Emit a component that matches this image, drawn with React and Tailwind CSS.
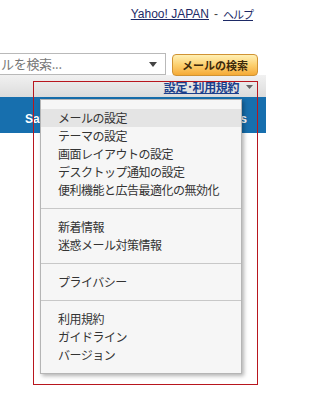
import React from "react";

const items1 = ["メールの設定", "テーマの設定", "画面レイアウトの設定", "デスクトップ通知の設定", "便利機能と広告最適化の無効化"];
const items2 = ["新着情報", "迷惑メール対策情報"];
const items3 = ["プライバシー"];
const items4 = ["利用規約", "ガイドライン", "バージョン"];

function Group({ items, highlightFirst }) {
  return (
    <div className="py-[9px]">
      {items.map((t, i) => (
        <div
          key={t}
          className={
            "h-[18px] leading-[18px] pl-[17px] whitespace-nowrap " +
            (highlightFirst && i === 0 ? "bg-[#e4e4e4]" : "")
          }
        >
          {t}
        </div>
      ))}
    </div>
  );
}

export default function App() {
  return (
    <div className="relative w-[266px] h-[393px] overflow-hidden bg-white font-['Liberation_Sans','Noto_Sans_CJK_JP',sans-serif]">
      {/* top links */}
      <div className="h-[53px] flex justify-end items-start pt-[6px] pr-[13px] text-[12px] leading-[16px] text-[#1d2a66]">
        <span className="underline">Yahoo! JAPAN</span>
        <span className="mx-[5px] text-[#444]">-</span>
        <span className="underline text-[11px] tracking-[-1px] font-['Noto_Sans_CJK_JP',sans-serif]">ヘルプ</span>
      </div>

      {/* search row */}
      <div className="h-[22px] flex items-start">
        <div className="relative z-10 ml-[-3px] w-[169px] h-[22px] border border-[#b9b9b9] bg-white flex items-center justify-between pl-[3px] pr-[8px]">
          <span className="text-[13px] leading-[16px] text-[#777] font-['Noto_Sans_CJK_JP',sans-serif] whitespace-nowrap tracking-[-0.3px]">
            ルを検索...
          </span>
          <svg width="8" height="5" viewBox="0 0 8 5">
            <path d="M0 0 L8 0 L4 5 Z" fill="#444" />
          </svg>
        </div>
        <div className="relative z-10 ml-[6px] mt-[1px] w-[86px] h-[22px] rounded-[4px] border border-[#d09334] bg-gradient-to-b from-[#fff0b4] via-[#fcd06e] to-[#f5aa35] flex items-center justify-center">
          <span className="text-[11px] leading-[14px] font-bold text-[#3d2a0c] font-['Noto_Sans_CJK_JP',sans-serif] whitespace-nowrap">
            メールの検索
          </span>
        </div>
      </div>

      {/* gray toolbar */}
      <div className="h-[22px] bg-gradient-to-b from-[#f1f1f1] to-[#dcdcdc] flex items-center justify-end pr-[13px]">
        <span className="text-[12px] leading-[15px] font-bold text-[#1b3f8c] underline font-['Noto_Sans_CJK_JP',sans-serif] whitespace-nowrap tracking-[-0.4px]">
          設定･利用規約
        </span>
        <svg className="ml-[7px] mt-[2px]" width="7" height="4" viewBox="0 0 7 4">
          <path d="M0 0 L7 0 L3.5 4 Z" fill="#666" />
        </svg>
      </div>

      {/* blue bar */}
      <div className="h-[36px] bg-[#176fae] flex justify-between items-start pt-[15px] pl-[25px] pr-[19px] text-[12px] leading-[14px] font-bold text-white">
        <span>Save</span>
        <span>ss</span>
      </div>

      {/* red outline */}
      <div className="absolute left-[33px] top-[81px] w-[225px] h-[304px] border border-[#b8161e]" />

      {/* dropdown menu */}
      <div className="absolute left-[40px] top-[99px] w-[202px] h-[275px] border border-[#b5b5b5] bg-[#f6f6f6] shadow-[2px_2px_4px_rgba(0,0,0,0.3)] text-[12px] text-[#333] tracking-[-0.5px] font-['Noto_Sans_CJK_JP',sans-serif]">
        <Group items={items1} highlightFirst />
        <div className="h-px bg-[#c8c8c8]" />
        <Group items={items2} />
        <div className="h-px bg-[#c8c8c8]" />
        <Group items={items3} />
        <div className="h-px bg-[#c8c8c8]" />
        <Group items={items4} />
      </div>
    </div>
  );
}
